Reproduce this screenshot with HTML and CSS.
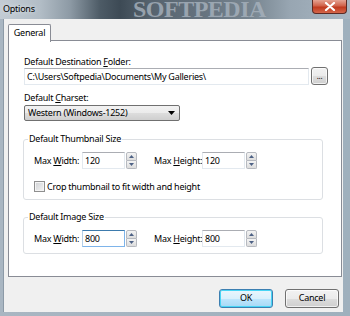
FILE: index.html
```html
<!DOCTYPE html>
<html>
<head>
<meta charset="utf-8">
<link rel="stylesheet" href="styles.css">
</head>
<body>
<div class="window">
  <div class="titlebar">
    <span class="title">Options</span>
    <span class="watermark">SOFTPEDIA</span>
    <div class="close">
      <svg width="12" height="9" viewBox="0 0 12 9"><path d="M2 1 L10 8 M10 1 L2 8" stroke="#fff" stroke-width="2.2" stroke-linecap="round"/></svg>
    </div>
  </div>
  <div class="client">
    <div class="tabs"><div class="tab">General</div></div>
    <div class="panel">
      <div class="label">Default Destination <u>F</u>older:</div>
      <div class="path-row">
        <div class="textbox path">C:\Users\Softpedia\Documents\My Galleries\</div>
        <div class="btn browse">...</div>
      </div>
      <div class="label charset-label">Default <u>C</u>harset:</div>
      <div class="combo">
        <span>Western (Windows-1252)</span>
        <svg width="7" height="4" viewBox="0 0 7 4"><path d="M0 0 H7 L3.5 4 Z" fill="#000"/></svg>
      </div>
      <fieldset class="group thumb">
        <legend>Default Thumbnail Size</legend>
        <div class="size-row">
          <span class="fld-label">Max <u>W</u>idth:</span>
          <div class="textbox num">120</div>
          <div class="spin"><div class="sb up"><svg width="5" height="3" viewBox="0 0 5 3"><path d="M0 3 L2.5 0 L5 3 Z" fill="#4d6185"/></svg></div><div class="sb down"><svg width="5" height="3" viewBox="0 0 5 3"><path d="M0 0 L2.5 3 L5 0 Z" fill="#4d6185"/></svg></div></div>
          <span class="fld-label second">Max <u>H</u>eight:</span>
          <div class="textbox num">120</div>
          <div class="spin"><div class="sb up"><svg width="5" height="3" viewBox="0 0 5 3"><path d="M0 3 L2.5 0 L5 3 Z" fill="#4d6185"/></svg></div><div class="sb down"><svg width="5" height="3" viewBox="0 0 5 3"><path d="M0 0 L2.5 3 L5 0 Z" fill="#4d6185"/></svg></div></div>
        </div>
        <div class="check-row"><span class="checkbox"></span><span>Crop thumbnail to fit width and height</span></div>
      </fieldset>
      <fieldset class="group image">
        <legend>Default Image Size</legend>
        <div class="size-row">
          <span class="fld-label">Max <u>W</u>idth:</span>
          <div class="textbox num focus">800</div>
          <div class="spin"><div class="sb up"><svg width="5" height="3" viewBox="0 0 5 3"><path d="M0 3 L2.5 0 L5 3 Z" fill="#4d6185"/></svg></div><div class="sb down"><svg width="5" height="3" viewBox="0 0 5 3"><path d="M0 0 L2.5 3 L5 0 Z" fill="#4d6185"/></svg></div></div>
          <span class="fld-label second">Max <u>H</u>eight:</span>
          <div class="textbox num">800</div>
          <div class="spin"><div class="sb up"><svg width="5" height="3" viewBox="0 0 5 3"><path d="M0 3 L2.5 0 L5 3 Z" fill="#4d6185"/></svg></div><div class="sb down"><svg width="5" height="3" viewBox="0 0 5 3"><path d="M0 0 L2.5 3 L5 0 Z" fill="#4d6185"/></svg></div></div>
        </div>
      </fieldset>
    </div>
    <div class="buttons">
      <div class="btn dlg ok">OK</div>
      <div class="btn dlg cancel">Cancel</div>
    </div>
  </div>
</div>
</body>
</html>
```

FILE: styles.css
```css
* { box-sizing: border-box; }
html, body { margin: 0; padding: 0; }
body {
  width: 350px;
  height: 316px;
  overflow: hidden;
  font-family: "Noto Sans", "Open Sans", sans-serif;
  font-size: 9px;
  letter-spacing: -0.25px;
  color: #000;
}
u { text-decoration: underline; text-underline-offset: 1px; }

.window {
  width: 350px;
  height: 316px;
  display: flex;
  flex-direction: column;
  background: linear-gradient(90deg, #a9b6c2 0%, #9fb0bd 100%);
}

.titlebar {
  position: relative;
  height: 19px;
  display: flex;
  align-items: flex-start;
  background: linear-gradient(90deg, #c3ccd4 0px, #b2bdc6 40px, #8d9aa5 70px, #4d5b66 100px, #3d4a55 120px, #56636e 150px, #65727e 200px, #76848f 250px, #98a6b2 290px, #a8b6c2 350px);
  overflow: hidden;
}
.title {
  position: relative;
  z-index: 2;
  padding: 2px 0 0 3px;
  font-size: 9px;
  line-height: 14px;
  color: #000;
  text-shadow: 0 0 4px #e8eef3;
}
.watermark {
  position: absolute;
  left: 133px;
  top: -3px;
  font-family: "Liberation Serif", serif;
  font-weight: bold;
  font-size: 24px;
  line-height: 24px;
  letter-spacing: -0.5px;
  color: #a7b2bd;
  opacity: 0.8;
}
.close {
  position: relative;
  z-index: 2;
  margin-left: auto;
  margin-right: 3px;
  width: 35px;
  height: 14px;
  border: 1px solid #5c2a24;
  border-top: none;
  border-radius: 0 0 4px 4px;
  background: linear-gradient(180deg, #e5a393 0%, #d0624a 45%, #c03a1f 55%, #d4664a 100%);
  display: flex;
  align-items: center;
  justify-content: center;
}

.client {
  flex: 1;
  margin: 0 7px 4px 3px;
  background: #f0f0f0;
  border-left: 1px solid #8c9aa7;
  display: flex;
  flex-direction: column;
}

.tabs {
  display: flex;
  padding: 5px 0 0 4px;
  height: 22px;
  position: relative;
  z-index: 2;
}
.tab {
  width: 43px;
  height: 18px;
  background: #fff;
  border: 1px solid #898c95;
  border-bottom: none;
  border-radius: 2px 2px 0 0;
  text-align: center;
  line-height: 16px;
}

.panel {
  margin: -1px 1px 0 4px;
  height: 237px;
  background: #fff;
  border: 1px solid #898c95;
  padding: 15px 0 0 15px;
}

.label {
  line-height: 11px;
  height: 11px;
}
.path-row {
  display: flex;
  align-items: center;
  height: 18px;
}
.textbox {
  border: 1px solid #e3e9ef;
  border-top-color: #abadb3;
  background: #fff;
  height: 17px;
  line-height: 15px;
  padding-left: 2px;
  white-space: nowrap;
  overflow: hidden;
}
.textbox.path {
  width: 285px;
}
.btn {
  border: 1px solid #707070;
  border-radius: 3px;
  background: linear-gradient(180deg, #f2f2f2 0%, #ebebeb 50%, #dddddd 51%, #cfcfcf 100%);
  box-shadow: inset 0 0 0 1px rgba(255,255,255,0.7);
  text-align: center;
}
.browse {
  width: 17px;
  height: 18px;
  margin-left: 2px;
  line-height: 16px;
  font-size: 8px;
}
.charset-label { margin-top: 7px; }
.combo {
  margin-top: 2px;
  width: 156px;
  height: 16px;
  border: 1px solid #707070;
  border-radius: 2px;
  background: linear-gradient(180deg, #f2f2f2 0%, #ebebeb 50%, #dddddd 51%, #cfcfcf 100%);
  display: flex;
  align-items: center;
  justify-content: space-between;
  padding: 0 4px 0 3px;
  line-height: 14px;
}

.group {
  margin: 12px 0 0 -1px;
  width: 300px;
  padding: 0 0 0 10px;
  border: 1px solid #dcdfe3;
  border-radius: 3px;
}
.group legend {
  padding: 0 1px;
  margin-left: -6px;
  line-height: 12px;
}
.thumb { padding-bottom: 5px; }
.image { margin-top: 11px; padding-bottom: 6px; }

.size-row {
  display: flex;
  align-items: center;
  margin-top: 7px;
  height: 17px;
}
.fld-label {
  width: 48px;
  white-space: nowrap;
  line-height: 14px;
}
.fld-label.second { margin-left: 17px; }
.textbox.num { width: 43px; height: 17px; }
.textbox.focus { border-color: #7eb4ea; border-top-color: #3d7bad; border-left-color: #b5cfe7; }
.spin {
  display: flex;
  flex-direction: column;
  margin-left: 1px;
  width: 11px;
  height: 17px;
}
.sb {
  flex: 1;
  border: 1px solid #b6b9bf;
  background: linear-gradient(180deg, #f4f4f4, #dcdcdc);
  display: flex;
  align-items: center;
  justify-content: center;
}
.sb.up { border-radius: 2px 2px 0 0; }
.sb.down { border-radius: 0 0 2px 2px; border-top: none; }

.check-row {
  display: flex;
  align-items: center;
  height: 16px;
  margin-top: 9px;
}
.checkbox {
  width: 11px;
  height: 11px;
  border: 1px solid #8f8f8f;
  background: linear-gradient(135deg, #cfd1d4, #f4f4f4);
  box-shadow: inset 0 0 0 1px #f4f4f4;
  margin-right: 2px;
}

.buttons {
  display: flex;
  justify-content: flex-end;
  gap: 12px;
  margin-top: 12px;
  padding-right: 4px;
}
.dlg {
  width: 54px;
  height: 19px;
  line-height: 16px;
}
.ok {
  border-color: #3c7fb1;
  background: linear-gradient(180deg, #eaf6fd 0%, #d9f0fc 50%, #bee6fd 51%, #a7d9f5 100%);
  box-shadow: inset 0 0 0 1px #48d5f5;
}
```
